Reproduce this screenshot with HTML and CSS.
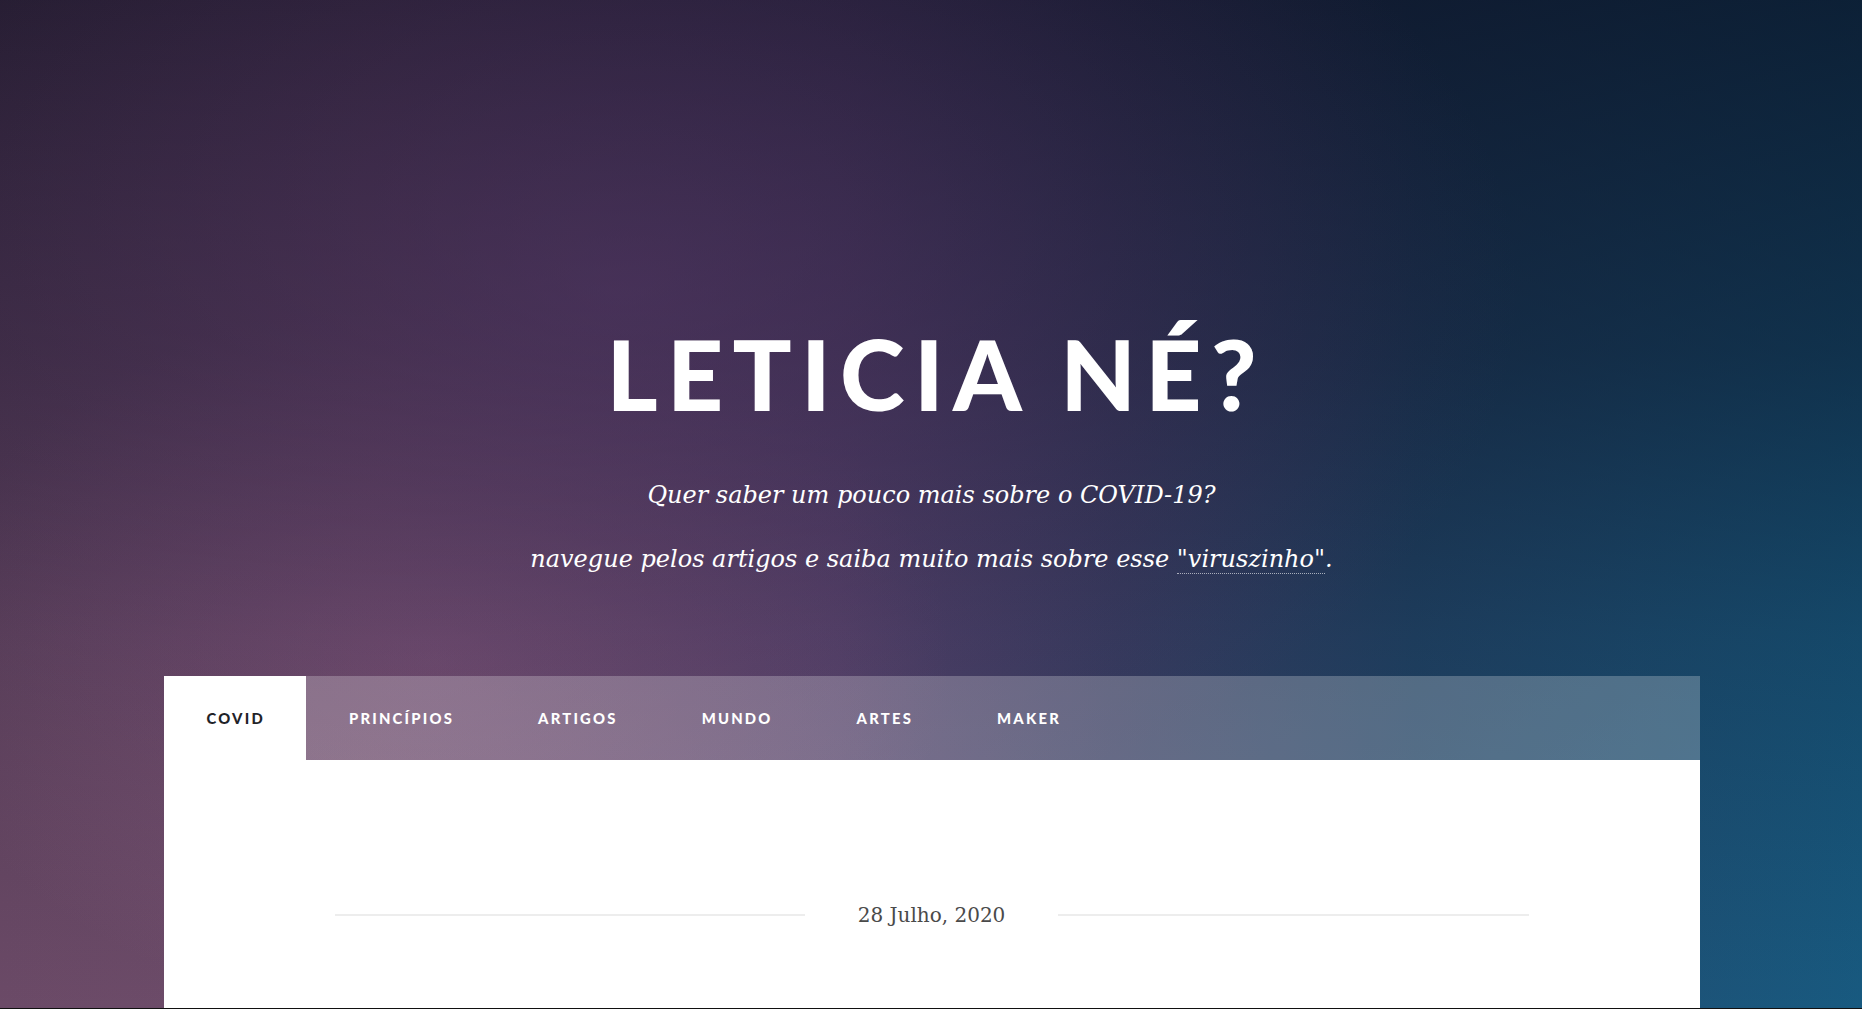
FILE: index.html
```html
<!DOCTYPE html>
<html lang="pt-BR">
<head>
<meta charset="utf-8">
<title>Leticia né?</title>
<link rel="stylesheet" href="styles.css">
</head>
<body>
<div class="page">
  <header class="hero">
    <h1 class="hero-title">Leticia né?</h1>
    <p class="hero-sub">Quer saber um pouco mais sobre o COVID-19?</p>
    <p class="hero-sub">navegue pelos artigos e saiba muito mais sobre esse <a class="hero-link" href="#">"viruszinho"</a>.</p>
  </header>
  <main class="card">
    <nav class="tabs">
      <a class="tab tab-active" href="#">Covid</a>
      <a class="tab" href="#">Princípios</a>
      <a class="tab" href="#">Artigos</a>
      <a class="tab" href="#">Mundo</a>
      <a class="tab" href="#">Artes</a>
      <a class="tab" href="#">Maker</a>
    </nav>
    <section class="card-body">
      <div class="date-row">
        <span class="date-line"></span>
        <span class="date-text">28 Julho, 2020</span>
        <span class="date-line"></span>
      </div>
    </section>
  </main>
</div>
<div class="bottom-edge"></div>
</body>
</html>
```

FILE: styles.css
```css
* { box-sizing: border-box; }

html, body {
  margin: 0;
  padding: 0;
  height: 100%;
}

body {
  font-family: "DejaVu Serif", serif;
  color: #fff;
  overflow: hidden;
  background:
    radial-gradient(ellipse 900px 560px at 620px 290px, rgba(95, 60, 115, 0.45), rgba(95, 60, 115, 0) 100%),
    linear-gradient(to bottom, rgba(8, 10, 26, 0.72) 0%, rgba(8, 10, 26, 0.5) 35%, rgba(8, 10, 26, 0.22) 63%, rgba(8, 10, 26, 0) 100%),
    radial-gradient(ellipse 520px 360px at 430px 660px, rgba(150, 100, 140, 0.55), rgba(150, 100, 140, 0) 100%),
    linear-gradient(to right, #6b4a67 0%, #6e4d6b 20%, #5c4a74 45%, #3e456c 60%, #234a6e 76%, #185a80 100%);
}

.page {
  height: 100vh;
  display: flex;
  flex-direction: column;
  padding-left: 1px;
}

.hero {
  display: flex;
  flex-direction: column;
  align-items: center;
  padding-top: 324px;
  padding-bottom: 99px;
  text-align: center;
}

.hero-title {
  margin: 0 0 55px 0;
  font-family: "Lato", sans-serif;
  font-weight: 900;
  font-size: 98px;
  line-height: 1;
  text-transform: uppercase;
  letter-spacing: 0.095em;
  margin-right: -0.095em;
  color: #fff;
}

.hero-sub {
  margin: 0;
  font-family: "DejaVu Serif", serif;
  font-style: italic;
  font-size: 24px;
  line-height: 36px;
  color: #fff;
}

.hero-sub + .hero-sub {
  margin-top: 28px;
}

.hero-link {
  color: #fff;
  text-decoration: none;
  border-bottom: 1px dotted rgba(255, 255, 255, 0.6);
}

.card {
  width: 1536px;
  margin: 0 auto;
  flex: 1;
  display: flex;
  flex-direction: column;
}

.tabs {
  display: flex;
  height: 84px;
  background: rgba(255, 255, 255, 0.24);
}

.tab {
  display: flex;
  align-items: center;
  padding: 0 41px 0 43px;
  font-family: "Lato", sans-serif;
  font-weight: 900;
  font-size: 14.8px;
  letter-spacing: 0.15em;
  text-transform: uppercase;
  color: #fff;
  text-decoration: none;
}

.tab-active {
  background: #fff;
  color: #1f2328;
}

.card-body {
  flex: 1;
  background: #fff;
  padding: 143px 171px 0;
}

.date-row {
  display: flex;
  align-items: center;
}

.date-line {
  flex: 1;
  height: 2px;
  background: #ededed;
}

.date-text {
  padding: 0 53px;
  font-family: "DejaVu Serif", serif;
  font-size: 20px;
  color: #4a4a4a;
  white-space: nowrap;
}

.bottom-edge {
  position: fixed;
  left: 0;
  right: 0;
  bottom: 0;
  height: 1px;
  background: #111;
}
```
